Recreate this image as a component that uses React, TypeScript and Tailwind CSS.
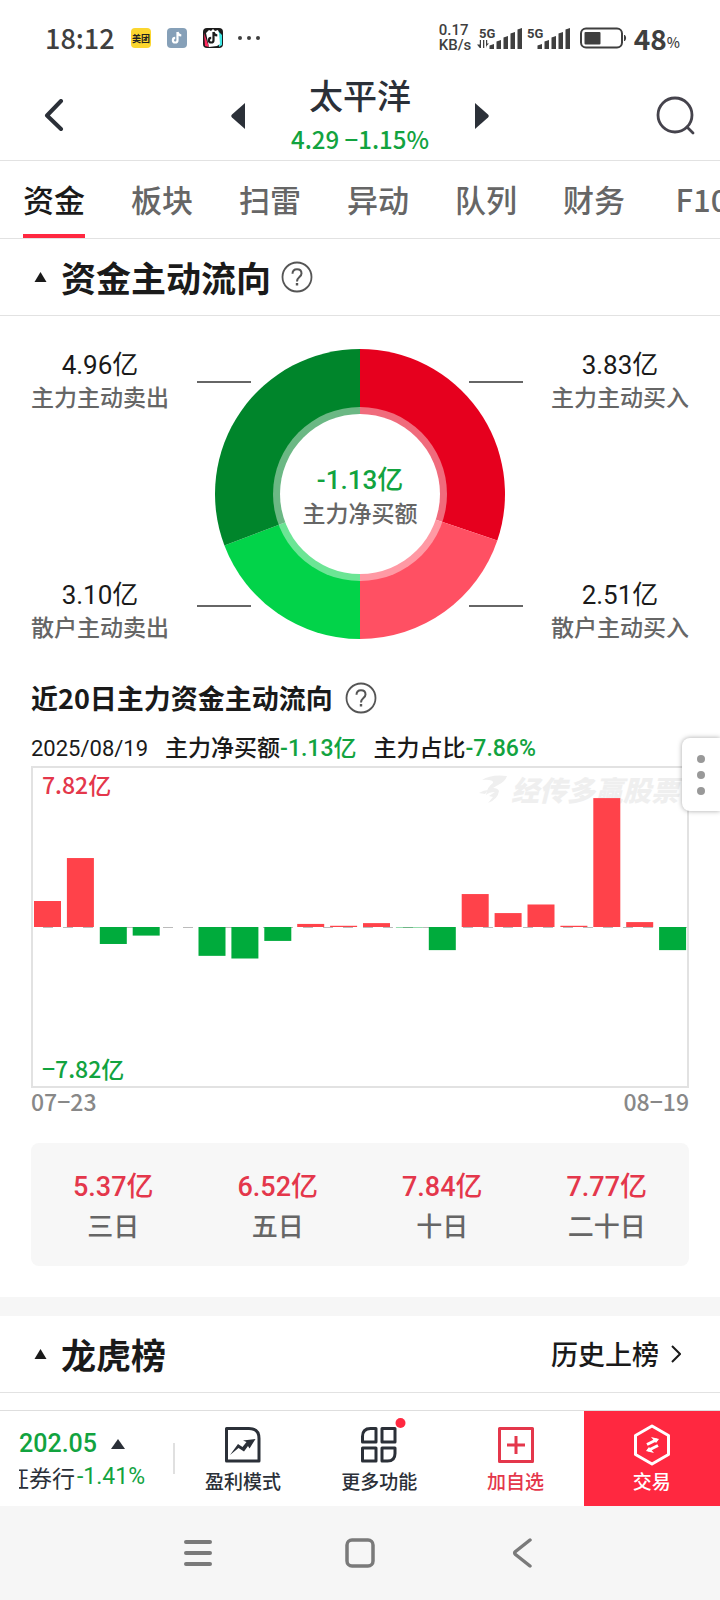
import { clsx } from "clsx";

const tabs = ["资金", "板块", "扫雷", "异动", "队列", "财务", "F10"];

// Net main-force inflow per trading day, in 亿
const flows = [
  1.27, 3.37, -0.83, -0.42, 0, -1.41, -1.54, -0.68, 0.15, 0.06,
  0.19, -0.02, -1.13, 1.61, 0.68, 1.1, 0.06, 6.3, 0.24, -1.13,
];
const maxFlow = 7.82;

const periods = [
  { label: "三日", value: "5.37亿" },
  { label: "五日", value: "6.52亿" },
  { label: "十日", value: "7.84亿" },
  { label: "二十日", value: "7.77亿" },
];

const num = "font-[Roboto,'Noto_Sans_CJK_SC',sans-serif]";

function Signal({ data = false }: { data?: boolean }) {
  return (
    <svg width="46" height="24" viewBox="0 0 46 24" fill="#3f3f3f" aria-hidden="true">
      <text className={num} x="2" y="12" fontSize="13" fontWeight="700">5G</text>
      {data && (
        <path d="M4 14v8H2.800L0 18.500h2.800V14zM6 14h1.300v8H6zM9 22v-8h1.200v3.500H12L9.500 20z" />
      )}
      {[5, 9, 13, 17, 21].map((h, i) => (
        <path
          key={h}
          d={`M${12.5 + i * 7} ${23 - h + 1.500}l4.500 -1.500V23h-4.500z`}
        />
      ))}
    </svg>
  );
}

function Note({ className }: { className?: string }) {
  return (
    <path
      className={className}
      d="M10.500 4v8.200a2.300 2.300 0 1 1-2.300-2.300M10.500 4c.3 2 1.800 3.300 3.800 3.500"
      fill="none"
      strokeWidth="2.200"
    />
  );
}

function StatusBar() {
  return (
    <div className="flex h-[72px] items-center justify-between pt-1 pr-10 pl-[45px] text-[#3f3f3f]">
      <div className="flex items-center">
        <span className="w-[86px] text-[27px] leading-8 font-medium">18:12</span>
        <div className="flex items-center gap-4">
          <span className="flex size-5 items-center justify-center rounded bg-[#fbd62f] text-[9px] leading-none font-bold whitespace-nowrap text-[#222]">
            美团
          </span>
          <svg width="20" height="20" viewBox="0 0 20 20" aria-hidden="true">
            <rect width="20" height="20" rx="4" fill="#86a0b8" />
            <Note className="stroke-white" />
          </svg>
          <svg width="20" height="20" viewBox="0 0 20 20" aria-hidden="true">
            <rect width="20" height="20" rx="4" fill="#1c1c1c" />
            <path d="M1 5l5 14-4-1z" fill="#ff2a5f" />
            <path d="M15 3l4 4v10l-3 2z" fill="#3fe6e4" />
            <path d="M3 5l3-3 2 1 2-2 2 2 3-1 1 3 1 11-3 2-8 1z" fill="#fff" />
            <Note className="stroke-[#1c1c1c]" />
          </svg>
        </div>
        <svg className="ml-[14px]" width="24" height="6" viewBox="0 0 24 6" fill="#3f3f3f" aria-hidden="true">
          <circle cx="3" cy="3" r="2" />
          <circle cx="12" cy="3" r="2" />
          <circle cx="21" cy="3" r="2" />
        </svg>
      </div>
      <div className="flex items-center">
        <div className={clsx(num, "flex w-[38px] flex-col text-[15px] leading-[15px] font-medium")}>
          <span>0.17</span>
          <span>KB/s</span>
        </div>
        <Signal data />
        <span className="w-[2px]" />
        <Signal />
        <svg className="ml-[9px]" width="48" height="22" viewBox="0 0 48 22" aria-hidden="true">
          <rect x="1" y="1.500" width="41" height="19" rx="5" fill="none" stroke="#3f3f3f" strokeWidth="2" />
          <rect x="4.500" y="5" width="16" height="12.500" rx="1" fill="#3f3f3f" />
          <path d="M44.500 8q2.500 3 0 6z" fill="#3f3f3f" stroke="#3f3f3f" />
        </svg>
        <span className="ml-[6px] text-[28px] leading-8 font-bold">48</span>
        <span className="self-end text-sm leading-6 font-medium">%</span>
      </div>
    </div>
  );
}

function Header() {
  return (
    <header className="grid h-[89px] grid-cols-[1fr_auto_1fr] items-center border-b border-[#e2e2e2] text-[#2b3038]">
      <button className="pl-11" aria-label="返回">
        <svg width="20" height="34" viewBox="0 0 20 34" fill="none" stroke="currentColor" strokeWidth="4" strokeLinecap="round" strokeLinejoin="round">
          <path d="M17 2L3 16.500 17 30" />
        </svg>
      </button>
      <div className="flex w-[258px] items-center justify-between">
        <button aria-label="上一只">
          <svg width="14" height="26" viewBox="0 0 14 26" fill="currentColor">
            <path d="M14 0v26L1 14.500q-1.500-1.500 0-3z" />
          </svg>
        </button>
        <div className="text-center">
          <h1 className="text-[34px] leading-[46px] font-medium">太平洋</h1>
          <p className="text-[24px] leading-[42px] font-medium text-[#12a33f]">4.29 −1.15%</p>
        </div>
        <button aria-label="下一只">
          <svg width="14" height="26" viewBox="0 0 14 26" fill="currentColor">
            <path d="M0 0v26l13-11.500q1.500-1.500 0-3z" />
          </svg>
        </button>
      </div>
      <button className="justify-self-end pr-6" aria-label="搜索">
        <svg width="40" height="40" viewBox="0 0 40 40" fill="none" stroke="#45434c" strokeWidth="2.800" strokeLinecap="round">
          <circle cx="19" cy="19" r="17" />
          <path d="M31 31l6 6" />
        </svg>
      </button>
    </header>
  );
}

function Help() {
  return (
    <button aria-label="说明">
      <svg width="32" height="32" viewBox="0 0 32 32" fill="none" stroke="#555" strokeWidth="1.800">
        <circle cx="16" cy="16" r="14.500" />
        <path d="M11.500 12.800c0-3 1.900-4.600 4.500-4.600s4.500 1.600 4.500 4.200c0 3.600-4.500 3.600-4.500 8" strokeWidth="2" />
        <path d="M16 22v2.500" strokeWidth="2.400" />
      </svg>
    </button>
  );
}

function SectionTitle({ title, children }: { title: string; children?: React.ReactNode }) {
  return (
    <div className="flex h-[77px] items-center border-b border-[#e2e2e2] pr-[39px] pl-[34px]">
      <svg className="mr-[14px]" width="13" height="10" viewBox="0 0 12 10" fill="#1a1a1a" aria-hidden="true">
        <path d="M6 0l6 10H0z" />
      </svg>
      <h2 className="text-[35px] leading-[44px] font-bold">{title}</h2>
      {children}
    </div>
  );
}

function FlowLabel({ value, label }: { value: string; label: string }) {
  return (
    <div className="text-center leading-[31px] whitespace-nowrap">
      <p className={clsx(num, "text-[26px] font-normal")}>{value}</p>
      <p className="text-[23px] text-[#666]">{label}</p>
    </div>
  );
}

// Each half of the ring is split by main-force vs retail share
function arc(from: number, to: number) {
  const point = (deg: number) => {
    const a = (deg * Math.PI) / 180;
    return `${163 + 145 * Math.sin(a)} ${145 - 145 * Math.cos(a)}`;
  };
  return `M163 145L${point(from)}A145 145 0 0 1 ${point(to)}z`;
}

function Donut() {
  const buy = (3.83 / (3.83 + 2.51)) * 180;
  const sell = 360 - (4.96 / (4.96 + 3.1)) * 180;
  return (
    <div className="relative mb-1 flex-1">
      <svg className="w-full" viewBox="0 0 326 290" aria-hidden="true">
        <path d={arc(0, buy)} fill="#e6001e" />
        <path d={arc(buy, 180)} fill="#ff5063" />
        <path d={arc(180, sell)} fill="#02d349" />
        <path d={arc(sell, 360)} fill="#00852b" />
        <circle cx="163" cy="145" r="87" fill="#fff" fillOpacity="0.420" />
        <circle cx="163" cy="145" r="80" fill="#fff" />
        <path d="M0 33h54M272 33h54M0 257h54M272 257h54" stroke="#666" strokeWidth="2" />
      </svg>
      <div className="absolute inset-0 flex flex-col items-center justify-center pt-1 text-center leading-[32px]">
        <p className={clsx(num, "text-[26px] font-medium text-[#12a33f]")}>-1.13亿</p>
        <p className="text-[23px] text-[#666]">主力净买额</p>
      </div>
    </div>
  );
}

function FlowChart() {
  return (
    <div className="relative h-[322px] border-2 border-[#e2e2e2]">
      <div className="absolute top-px right-2 flex items-center gap-1 text-[#efefef]">
        <svg width="28" height="28" viewBox="0 0 28 28" fill="currentColor" aria-hidden="true">
          <path d="M3 5Q12-1 28 1q-2 6-9 9l-5 3q5 0 6 3-1 8-11 12l5-6-4-1 6-4q-6 0-9 3 1-8 7-12 1-4-11-3z" />
          <path d="M0 18q5-3 9-3l-3 4z" />
        </svg>
        <span className="text-[28px] leading-10 font-black whitespace-nowrap italic">经传多赢股票</span>
      </div>
      <svg className="absolute inset-0 h-full w-full" viewBox="0 0 654 318" preserveAspectRatio="none" aria-hidden="true">
        <path d="M-2 159.500H656" stroke="#bbb" strokeDasharray="10 10" strokeDashoffset="8" />
        {flows.map((v, i) => {
          const h = (Math.abs(v) / maxFlow) * 160;
          return (
            <rect
              key={i}
              x={1 + i * 32.900}
              y={v > 0 ? 159 - h : 159}
              width="27"
              height={h}
              fill={v > 0 ? "#ff424a" : "#00ab3c"}
            />
          );
        })}
      </svg>
      <div className="absolute inset-0 flex flex-col justify-between px-[9px] pb-[2px] text-[23px] leading-8 font-medium">
        <span className="text-[#e4374b]">7.82亿</span>
        <span className="text-[#12a33f]">−7.82亿</span>
      </div>
    </div>
  );
}

function NavItem({ label, className, children }: { label: string; className?: string; children: React.ReactNode }) {
  return (
    <button className={clsx("flex flex-1 flex-col items-center pt-3 text-[19px] leading-7 font-medium", className)}>
      <svg className="overflow-visible" width="44" height="44" viewBox="0 0 44 44" fill="none" stroke="currentColor" strokeWidth="3" strokeLinejoin="round" aria-hidden="true">
        {children}
      </svg>
      {label}
    </button>
  );
}

function BottomNav() {
  return (
    <nav className="flex h-24 border-t border-[#dedede] bg-white text-[#2b3038]">
      <div className="flex w-[175px] shrink-0 items-center justify-between">
        <div className="overflow-hidden pt-1 pl-[19px]">
          <div className={clsx(num, "flex items-center gap-[14px] text-[25px] leading-8 font-medium text-[#12a33f]")}>
            202.05
            <svg width="14" height="10" viewBox="0 0 14 10" fill="#2b3038" aria-hidden="true">
              <path d="M7 0l7 10H0z" />
            </svg>
          </div>
          <div className="flex items-center text-[23px] leading-[34px] whitespace-nowrap">
            <span className="flex w-[56px] justify-end overflow-hidden">上证券行</span>
            <span className={clsx(num, "pl-[2px] text-[#12a33f]")}>-1.41%</span>
          </div>
        </div>
        <span className="h-[31px] w-[2px] shrink-0 bg-[#e0e0e0]" />
      </div>
      <NavItem label="盈利模式">
        <path d="M5.500 5.500H28q10 0 10 10v22.500H5.500z" />
        <path d="M9 32l8-11 4.500 3 4-5-3.500-1.500 12.500-1.500-6 9.500-1.500-2.500-4 5.500-5.500-3.500z" fill="currentColor" stroke="none" />
      </NavItem>
      <NavItem label="更多功能">
        <path d="M13.500 5.500H19v13.500H5.500v-5.500q0-8 8-8zM25 5.500h13V19H25zM5.500 25H19v13H5.500zM25 25h13v5.500q0 7.500-7.500 7.500H25z" />
        <circle cx="43.500" cy="0" r="5" fill="#ff2840" stroke="none" />
      </NavItem>
      <NavItem label="加自选" className="text-[#e4374b]">
        <path d="M5.500 5.500h33v33h-33zM13 22h18M22 13v18" />
      </NavItem>
      <NavItem label="交易" className="bg-[#ff2840] text-white">
        <path d="M22 3L38.500 12.500v19L22 41 5.500 31.500v-19z" />
        <path d="M17 21.500l10-5M28 22.500l-10 5" />
        <path d="M21 14l8 2-3 4zM24 30l-8-2 3-4z" fill="currentColor" stroke="none" />
      </NavItem>
    </nav>
  );
}

function SystemNav() {
  return (
    <div className="grid h-[94px] grid-cols-3 place-items-center bg-[#f6f6f6] px-[117px] text-[#7a7a7a]">
      <button aria-label="菜单">
        <svg width="28" height="28" viewBox="0 0 28 28" stroke="currentColor" strokeWidth="4" strokeLinecap="round">
          <path d="M2 3h24M2 14h24M2 25h24" />
        </svg>
      </button>
      <button aria-label="主页">
        <svg width="30" height="30" viewBox="0 0 30 30" fill="none" stroke="currentColor" strokeWidth="3.500">
          <rect x="2" y="2" width="26" height="26" rx="5" />
        </svg>
      </button>
      <button aria-label="后退">
        <svg width="20" height="30" viewBox="0 0 20 30" fill="none" stroke="currentColor" strokeWidth="3.500" strokeLinecap="round" strokeLinejoin="round">
          <path d="M18 2L3.500 13.500q-1.500 1.500 0 3L18 28" />
        </svg>
      </button>
    </div>
  );
}

export default function App() {
  return (
    <div className="flex min-h-screen flex-col overflow-hidden bg-white font-['Noto_Sans_CJK_SC',sans-serif] text-[#1a1a1a]">
      <StatusBar />
      <Header />

      <nav className="flex h-[78px] gap-[46px] overflow-hidden border-b border-[#e2e2e2] pl-[23px]">
        {tabs.map((tab, i) => (
          <button
            key={tab}
            className={clsx(
              "min-w-[62px] shrink-0 border-b-4 pt-[3px] text-[31px] font-medium",
              i === 0 ? "border-[#ff2840]" : "border-transparent text-[#666]"
            )}
          >
            {tab}
          </button>
        ))}
      </nav>

      <main className="flex-1 font-medium">
        <section>
          <SectionTitle title="资金主动流向">
            <span className="ml-[10px] flex">
              <Help />
            </span>
          </SectionTitle>

          <div className="px-[31px] pt-[33px] pb-[31px]">
            <div className="flex gap-7">
              <div className="flex flex-col justify-between py-px">
                <FlowLabel value="4.96亿" label="主力主动卖出" />
                <FlowLabel value="3.10亿" label="散户主动卖出" />
              </div>
              <Donut />
              <div className="flex flex-col justify-between py-px">
                <FlowLabel value="3.83亿" label="主力主动买入" />
                <FlowLabel value="2.51亿" label="散户主动买入" />
              </div>
            </div>

            <div className="mt-[35px] flex h-10 items-center gap-3">
              <h3 className="text-[27px] font-bold">近20日主力资金主动流向</h3>
              <Help />
            </div>

            <div className="relative mt-[10px]">
              <div className="flex h-[38px] items-baseline gap-[17px] text-[23px] leading-9 whitespace-nowrap">
                <span className={clsx(num, "text-[22px] font-normal")}>2025/08/19</span>
                <span className="flex items-baseline">
                  主力净买额<span className={clsx(num, "text-[#12a33f]")}>-1.13亿</span>
                </span>
                <span className="flex items-baseline">
                  主力占比<span className={clsx(num, "text-[#12a33f]")}>-7.86%</span>
                </span>
              </div>
              <FlowChart />
              <button
                className="absolute top-[10px] -right-[31px] flex h-[73px] w-[38px] flex-col items-center justify-center gap-2 rounded-l-lg bg-white shadow-[0_0_5px_rgba(0,0,0,0.35)]"
                aria-label="更多"
              >
                <span className="size-2 rounded-full bg-[#999]" />
                <span className="size-2 rounded-full bg-[#999]" />
                <span className="size-2 rounded-full bg-[#999]" />
              </button>
            </div>

            <div className="flex justify-between text-[23px] leading-[26px] text-[#888]">
              <span>07−23</span>
              <span>08−19</span>
            </div>

            <div className="mt-[29px] grid grid-cols-4 rounded-lg bg-[#f7f7f7] pt-[25px] pb-[22px] text-center leading-[38px]">
              {periods.map((p) => (
                <div key={p.label}>
                  <p className={clsx(num, "text-[27px] text-[#e4374b]")}>{p.value}</p>
                  <p className="text-[26px] text-[#666]">{p.label}</p>
                </div>
              ))}
            </div>
          </div>
        </section>

        <section className="border-t-[19px] border-[#f6f6f6]">
          <SectionTitle title="龙虎榜">
            <a href="#history" className="ml-auto flex items-center gap-3 text-[27px]">
              历史上榜
              <svg width="10" height="18" viewBox="0 0 10 18" fill="none" stroke="currentColor" strokeWidth="2" aria-hidden="true">
                <path d="M1 1l8 8-8 8" />
              </svg>
            </a>
          </SectionTitle>
        </section>
      </main>

      <div className="mt-[17px]">
        <BottomNav />
        <SystemNav />
      </div>
    </div>
  );
}
